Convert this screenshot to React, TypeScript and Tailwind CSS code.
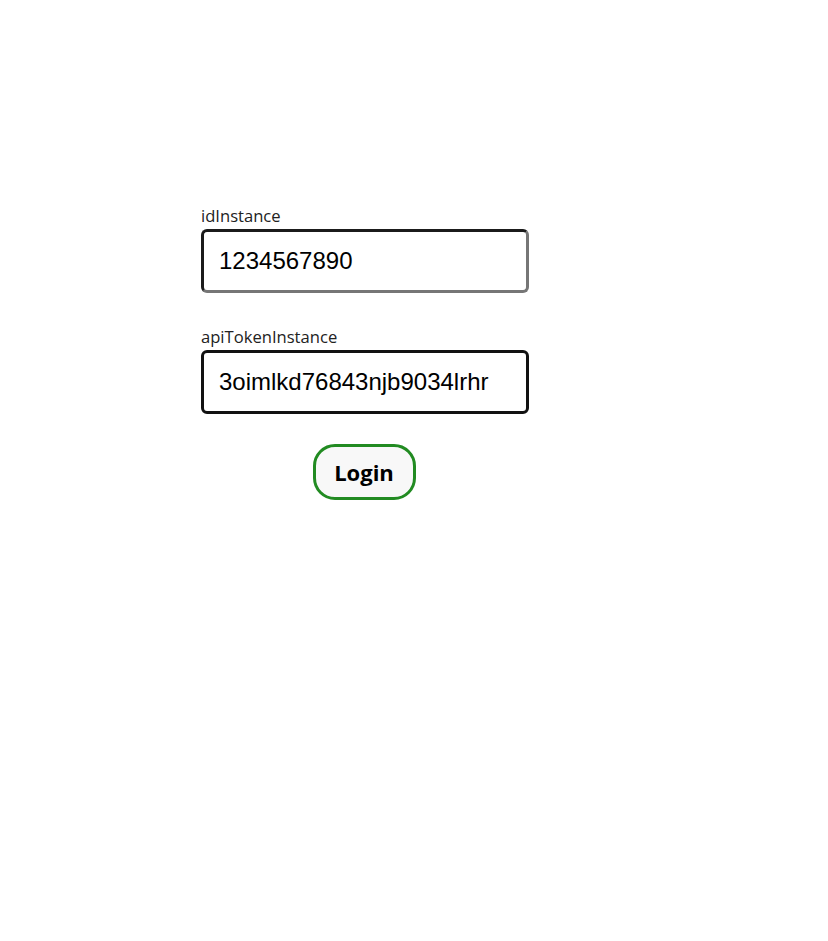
export default function App() {
  return (
    <div className="min-h-screen bg-white pt-[205px] pl-[201px]">
      <form
        className="flex w-[328px] flex-col"
        onSubmit={(e) => e.preventDefault()}
      >
        <label
          htmlFor="idInstance"
          className="font-['Open_Sans','Noto_Sans',sans-serif] text-[16.6px] leading-[21px] text-[#222]"
        >
          idInstance
        </label>
        <input
          id="idInstance"
          defaultValue="1234567890"
          className="mt-[3px] h-[64px] w-full rounded-[6px] border-[3px] border-t-[#1b1b1b] border-l-[#1b1b1b] border-r-[#767676] border-b-[#767676] bg-white pl-[15px] font-['Liberation_Sans',Arial,sans-serif] text-[24px] text-black outline-none"
        />

        <label
          htmlFor="apiTokenInstance"
          className="mt-[33px] font-['Open_Sans','Noto_Sans',sans-serif] text-[16.6px] leading-[21px] text-[#222]"
        >
          apiTokenInstance
        </label>
        <input
          id="apiTokenInstance"
          defaultValue="3oimlkd76843njb9034lrhr"
          className="mt-[3px] h-[64px] w-full rounded-[6px] border-[3px] border-[#111] bg-white pl-[15px] font-['Liberation_Sans',Arial,sans-serif] text-[24px] text-black outline-none"
        />

        <button
          type="submit"
          className="mx-auto mt-[30px] h-[56px] w-[103px] -translate-x-px rounded-[22px] border-[3px] border-[#228b22] bg-[#f8f8f8] font-['Open_Sans','Noto_Sans',sans-serif] text-[22px] font-bold text-black"
        >
          Login
        </button>
      </form>
    </div>
  );
}
